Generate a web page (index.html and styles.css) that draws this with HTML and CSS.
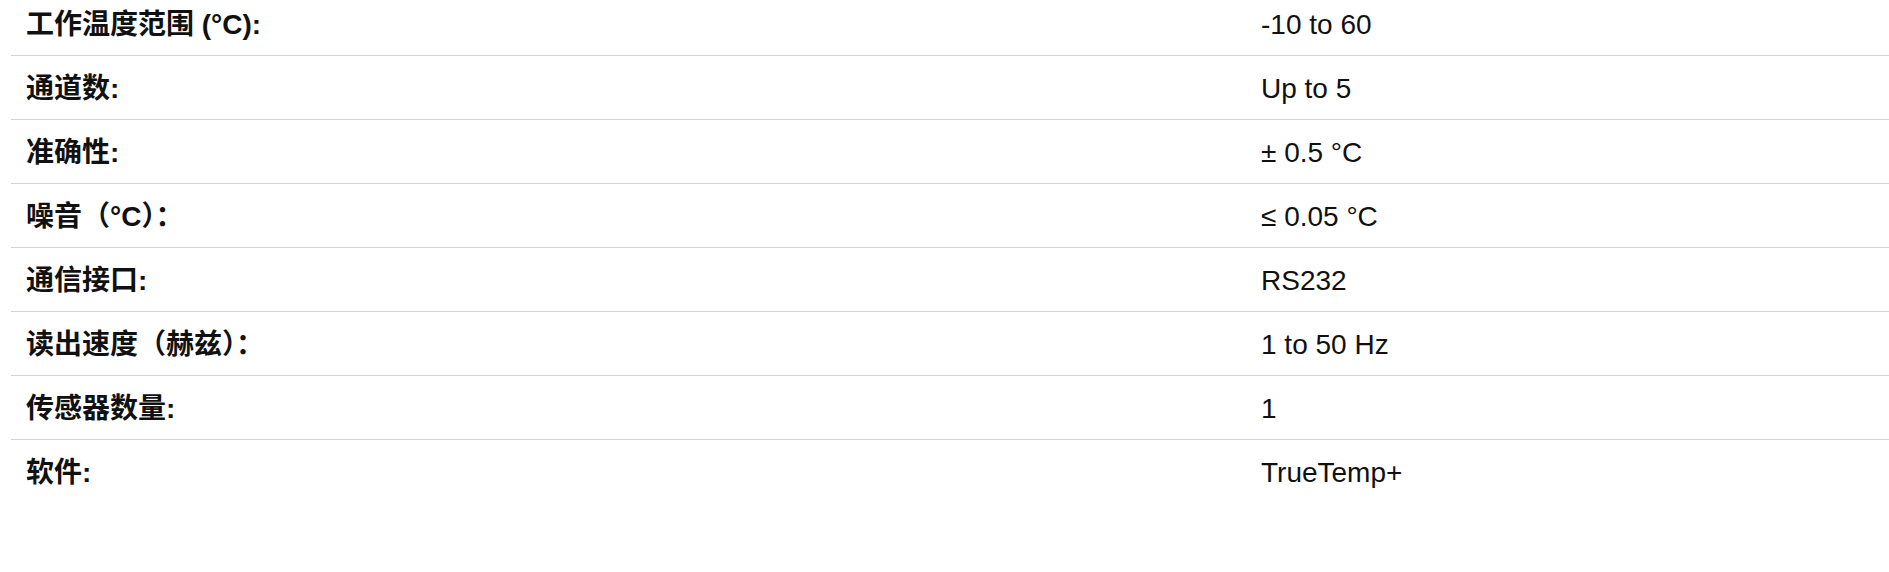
FILE: index.html
```html
<!DOCTYPE html>
<html lang="zh-CN">
<head>
    <meta charset="UTF-8">
    <meta name="viewport" content="width=device-width, initial-scale=1.0">
    <title>技术参数</title>
    <link rel="stylesheet" href="styles.css">
</head>
<body>
    <div class="specs">
        <table class="spec-table">
            <colgroup>
                <col class="col-label">
                <col class="col-value">
            </colgroup>
            <tbody>
                <tr>
                    <th>工作温度范围 (°C):</th>
                    <td>-10 to 60</td>
                </tr>
                <tr>
                    <th>通道数:</th>
                    <td>Up to 5</td>
                </tr>
                <tr>
                    <th>准确性:</th>
                    <td>± 0.5 °C</td>
                </tr>
                <tr>
                    <th>噪音（°C）：</th>
                    <td>≤ 0.05 °C</td>
                </tr>
                <tr>
                    <th>通信接口:</th>
                    <td>RS232</td>
                </tr>
                <tr>
                    <th>读出速度（赫兹）：</th>
                    <td>1 to 50 Hz</td>
                </tr>
                <tr>
                    <th>传感器数量:</th>
                    <td>1</td>
                </tr>
                <tr>
                    <th>软件:</th>
                    <td>TrueTemp+</td>
                </tr>
            </tbody>
        </table>
    </div>
</body>
</html>
```

FILE: styles.css
```css
body {
    margin: 0;
    background: #fff;
    font-family: "Liberation Sans", Arial, "Noto Sans CJK SC", sans-serif;
    color: #111;
}
.specs {
    padding-left: 11px;
}
.spec-table {
    width: 1878px;
    margin-top: -8px;
    border-collapse: collapse;
    table-layout: fixed;
}
.col-label {
    width: 1235px;
}
.spec-table th,
.spec-table td {
    padding: 16px 15px 14px;
    font-size: 28px;
    line-height: 33px;
    text-align: left;
    vertical-align: middle;
    border-bottom: 1px solid #ced5dc;
}
.spec-table th {
    font-weight: bold;
}
.spec-table td {
    font-weight: normal;
}
.spec-table tr:last-child th,
.spec-table tr:last-child td {
    border-bottom: none;
}
```
